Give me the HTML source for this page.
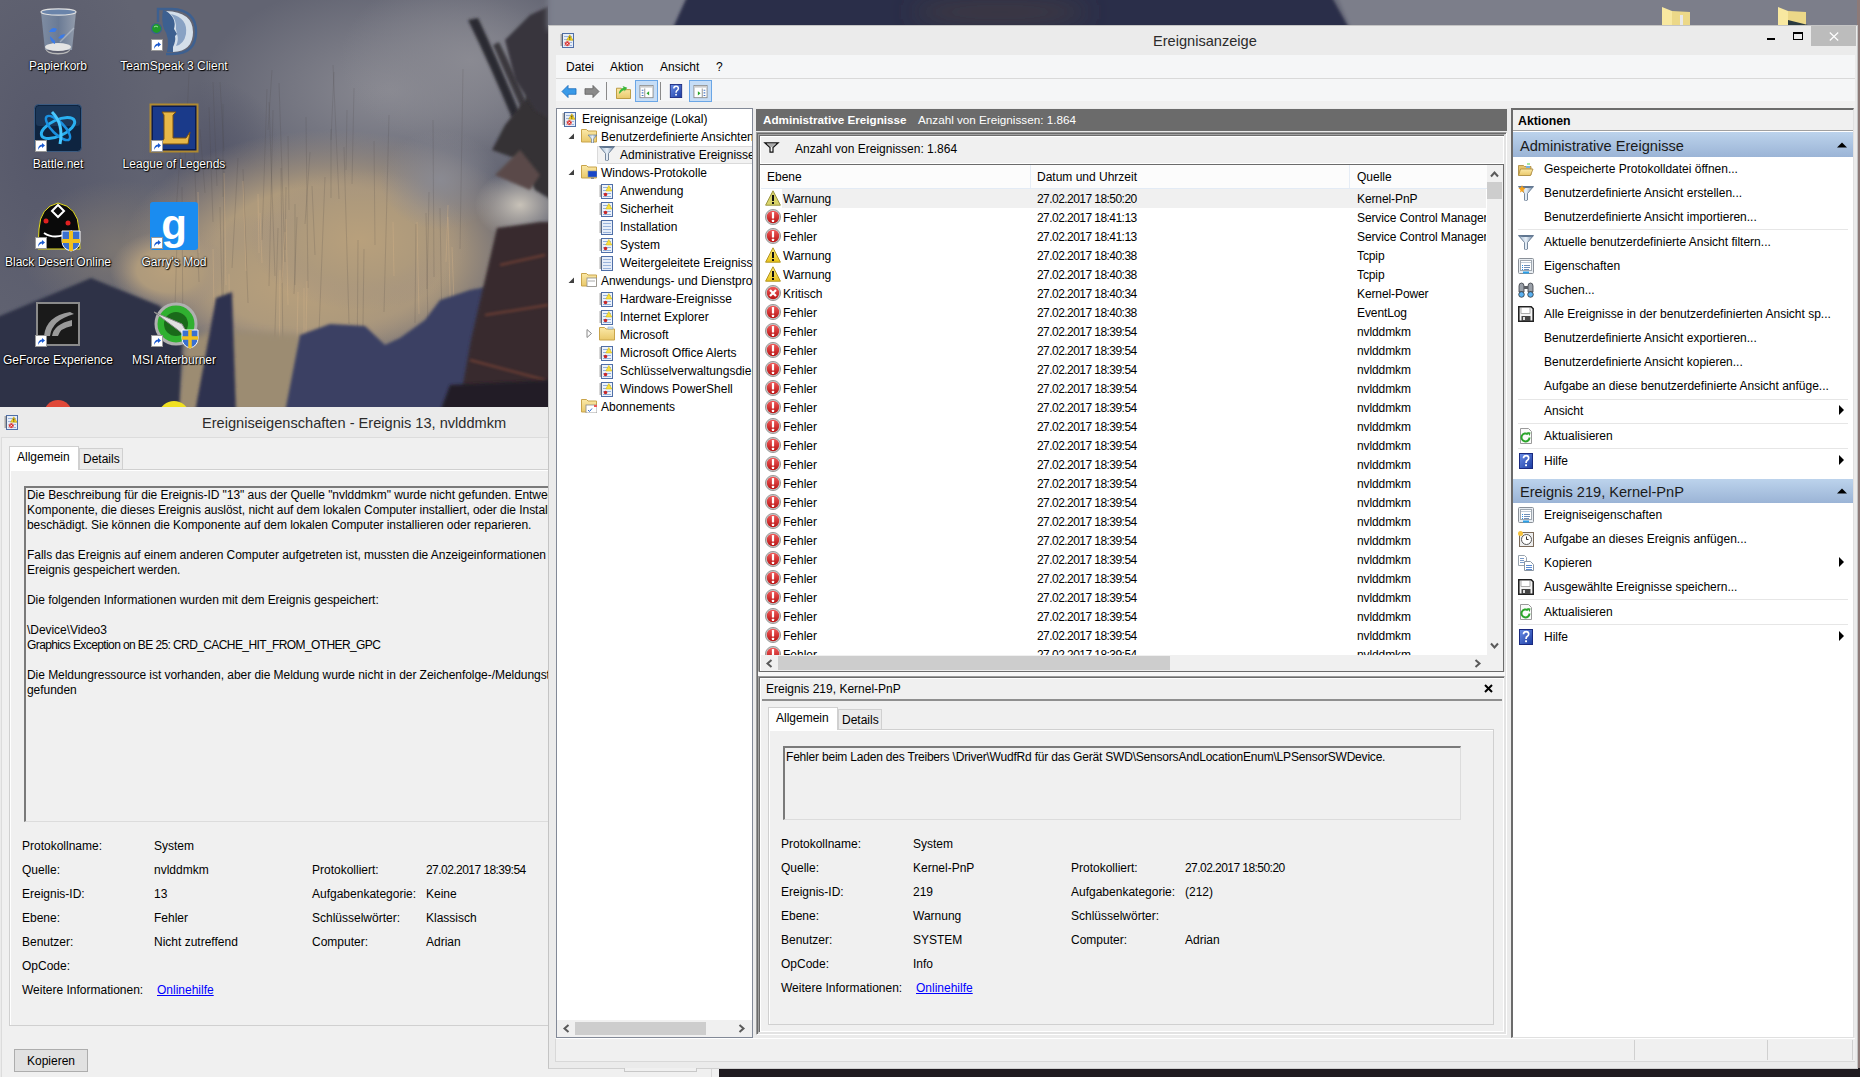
<!DOCTYPE html>
<html><head><meta charset="utf-8"><style>
*{margin:0;padding:0;box-sizing:border-box}
html,body{width:1860px;height:1077px;overflow:hidden;position:relative;font-family:"Liberation Sans",sans-serif;font-size:12px;color:#000}
.r{position:absolute}
.t{position:absolute;white-space:nowrap;line-height:12px;height:12px;margin-top:-10px}
.ic{position:absolute;overflow:visible}
.dl{color:#fff;text-shadow:0 0 2px #000,1px 1px 1px #000,0 0 1px #000;font-size:12px;text-align:center;width:130px;margin-left:-65px}
.dt{letter-spacing:-0.55px}
a{color:#0000ff;text-decoration:underline}
</style></head><body>

<svg width="0" height="0" style="position:absolute">
<defs>
<linearGradient id="gRed" x1="0" y1="0" x2="0" y2="1"><stop offset="0" stop-color="#f05a5a"/><stop offset="1" stop-color="#b81414"/></linearGradient>
<linearGradient id="gYel" x1="0" y1="0" x2="0" y2="1"><stop offset="0" stop-color="#fff07a"/><stop offset="1" stop-color="#e8c21a"/></linearGradient>
<linearGradient id="gFold" x1="0" y1="0" x2="0" y2="1"><stop offset="0" stop-color="#fbe9a8"/><stop offset="1" stop-color="#e9c86a"/></linearGradient>
<linearGradient id="gFun" x1="0" y1="0" x2="1" y2="0"><stop offset="0" stop-color="#9fb7cf"/><stop offset=".5" stop-color="#e8f0f8"/><stop offset="1" stop-color="#6f8aa8"/></linearGradient>
<linearGradient id="gBlueHdr" x1="0" y1="0" x2="0" y2="1"><stop offset="0" stop-color="#bcd3ec"/><stop offset="1" stop-color="#9bb4d6"/></linearGradient>
<linearGradient id="gHelp" x1="0" y1="0" x2="1" y2="1"><stop offset="0" stop-color="#6a8ee8"/><stop offset="1" stop-color="#1a3aa0"/></linearGradient>
<symbol id="warn" viewBox="0 0 16 16"><path d="M8 0.8 L15.4 15.2 H0.6 Z" fill="url(#gYel)" stroke="#b39420" stroke-width="1" stroke-linejoin="round"/><rect x="7" y="5" width="2" height="6" fill="#111"/><rect x="7" y="12" width="2" height="2" fill="#111"/></symbol>
<symbol id="warn2" viewBox="0 0 16 16"><path d="M8 0.8 L15.4 15.2 H0.6 Z" fill="#d9d46a" stroke="#9a9440" stroke-width="1" stroke-linejoin="round"/><rect x="7" y="5" width="2" height="6" fill="#111"/><rect x="7" y="12" width="2" height="2" fill="#111"/></symbol>
<symbol id="err" viewBox="0 0 16 16"><circle cx="8" cy="8" r="7.6" fill="#c8c8c8" stroke="#8a8a8a" stroke-width=".8"/><circle cx="8" cy="8" r="6.2" fill="url(#gRed)"/><rect x="6.9" y="3" width="2.2" height="6.5" rx=".6" fill="#fff"/><rect x="6.9" y="10.8" width="2.2" height="2.2" rx=".5" fill="#fff"/></symbol>
<symbol id="crit" viewBox="0 0 16 16"><circle cx="8" cy="8" r="7.6" fill="#c8c8c8" stroke="#8a8a8a" stroke-width=".8"/><circle cx="8" cy="8" r="6.2" fill="url(#gRed)"/><path d="M5 5 L11 11 M11 5 L5 11" stroke="#fff" stroke-width="2.2"/></symbol>
<symbol id="log" viewBox="0 0 14 15"><rect x="2.5" y="0.5" width="11" height="14" fill="#e6edf8" stroke="#4f6fa8"/><path d="M4 3.5h8M4 6.5h8M4 9.5h8M4 12.5h8" stroke="#9ab4dc" stroke-width="1"/><path d="M0.5 2h2.5M0.5 4h2.5M0.5 6h2.5M0.5 8h2.5M0.5 10h2.5M0.5 12h2.5" stroke="#555" stroke-width=".9"/><path d="M9.8 1.8 L13 7.3 H6.6 Z" fill="#f6d31c" stroke="#b89400" stroke-width=".5"/><path d="M9.8 3.6 V5.6 M9.8 6.2 V6.8" stroke="#222" stroke-width=".9"/><circle cx="7.3" cy="10.6" r="2.7" fill="#d42a2a" stroke="#fff" stroke-width=".5"/><path d="M6.3 9.6 L8.3 11.6 M8.3 9.6 L6.3 11.6" stroke="#fff" stroke-width=".8"/></symbol>
<symbol id="logs" viewBox="0 0 14 15"><rect x="2.5" y="0.5" width="11" height="14" fill="#eef3fa" stroke="#4f6fa8"/><path d="M4 3.5h8M4 6.5h8M4 9.5h8M4 12.5h8" stroke="#8fb0dc" stroke-width="1"/><path d="M0.5 2h2.5M0.5 4h2.5M0.5 6h2.5M0.5 8h2.5M0.5 10h2.5M0.5 12h2.5" stroke="#666" stroke-width="1"/><path d="M9.8 1.5 L12.8 7 H6.8 Z" fill="#f8e040" stroke="#d0b000" stroke-width=".5"/><circle cx="6.5" cy="10.5" r="1.8" fill="#c8282a"/></symbol>
<symbol id="logp" viewBox="0 0 14 15"><rect x="2.5" y="0.5" width="11" height="14" fill="#e6edf8" stroke="#4f6fa8"/><path d="M4 3.5h8M4 6.5h8M4 9.5h8M4 12.5h8" stroke="#9ab4dc" stroke-width="1"/><path d="M0.5 2h2.5M0.5 4h2.5M0.5 6h2.5M0.5 8h2.5M0.5 10h2.5M0.5 12h2.5" stroke="#555" stroke-width=".9"/></symbol>
<symbol id="folder" viewBox="0 0 16 16"><path d="M0.5 2.5 h5 l1.5 1.5 h8.5 v11 h-15 z" fill="url(#gFold)" stroke="#c9a44a"/><rect x="9" y="2" width="5" height="2" fill="#cfe2f5" stroke="#7aa0c8" stroke-width=".5"/></symbol>
<symbol id="folderf" viewBox="0 0 16 16"><path d="M0.5 2.5 h5 l1.5 1.5 h8.5 v11 h-15 z" fill="url(#gFold)" stroke="#c9a44a"/><path d="M7 8 h9 l-3.5 4 v4 h-2 v-4 z" fill="url(#gFun)" stroke="#5f7894" stroke-width=".6"/></symbol>
<symbol id="folderw" viewBox="0 0 16 16"><path d="M0.5 2.5 h5 l1.5 1.5 h8.5 v11 h-15 z" fill="url(#gFold)" stroke="#c9a44a"/><rect x="7" y="8" width="9" height="6" fill="#1846c8" stroke="#7a8aa0" stroke-width=".6"/><rect x="10" y="14.5" width="3" height="1.5" fill="#888"/></symbol>
<symbol id="foldera" viewBox="0 0 16 16"><path d="M0.5 2.5 h5 l1.5 1.5 h8.5 v11 h-15 z" fill="url(#gFold)" stroke="#c9a44a"/><rect x="6" y="7" width="9.5" height="8.5" fill="#fff" stroke="#8a8a8a" stroke-width=".8"/><path d="M7 10h7" stroke="#aaa"/></symbol>
<symbol id="folders" viewBox="0 0 16 16"><path d="M0.5 2.5 h5 l1.5 1.5 h8.5 v11 h-15 z" fill="url(#gFold)" stroke="#c9a44a"/><rect x="5" y="8" width="11" height="8" fill="#fff" stroke="#8a8a8a" stroke-width=".8"/><path d="M7 13 l1.5 1.5 l2.5 -3" stroke="#2a6ad0" fill="none"/><rect x="13" y="8" width="3" height="2" fill="#e55"/></symbol>
<symbol id="funnel" viewBox="0 0 16 16"><path d="M0.5 1.5 h15 l-6 7 v6.5 l-1.5 1 h-0.5 l-1 -1 v-6.5 z" fill="url(#gFun)" stroke="#5a6e88" stroke-width=".8"/><ellipse cx="8" cy="2" rx="7.5" ry="1" fill="#5f7590"/></symbol>
<symbol id="funnelo" viewBox="0 0 16 16"><path d="M0.5 1.5 h15 l-6 7 v6.5 l-1.5 1 h-0.5 l-1 -1 v-6.5 z" fill="url(#gFun)" stroke="#5a6e88" stroke-width=".8"/><ellipse cx="8" cy="2" rx="7.5" ry="1" fill="#5f7590"/><path d="M4 0 L5 2.5 L7.5 3 L5.5 5 L6 7.5 L4 6.2 L2 7.5 L2.5 5 L0.5 3 L3 2.5Z" fill="#f7a21a"/></symbol>
<symbol id="funnelb" viewBox="0 0 16 16"><path d="M1 2 h14 l-5.5 6 v5 h-3 v-5 z" fill="#f4f4f4" stroke="#111" stroke-width="1.1"/><path d="M4 3.5 h8 l-3 3.5 h-2z" fill="#aaa"/></symbol>
<symbol id="help" viewBox="0 0 16 16"><rect x="1.5" y="0.5" width="13" height="15" fill="url(#gHelp)" stroke="#1a2a80"/><path d="M5.5 5.2 q0-2.6 2.6-2.6 q2.6 0 2.6 2.5 q0 1.5-1.6 2.4 q-1 .6-1 1.9 v.6" stroke="#fff" stroke-width="1.7" fill="none"/><rect x="7.1" y="11.3" width="1.9" height="1.9" fill="#fff"/></symbol>
<symbol id="refresh" viewBox="0 0 16 16"><path d="M2.5 .5 h8 l3 3 v12 h-11z" fill="#fafafa" stroke="#9a9a9a"/><path d="M11.5 9.5 a4 4 0 1 1 -1.5 -3.2" stroke="#2aa52a" stroke-width="2" fill="none"/><path d="M9 4 l3.5 .5 l-.8 3.5z" fill="#2aa52a"/></symbol>
<symbol id="props" viewBox="0 0 16 16"><rect x=".5" y=".5" width="15" height="15" rx="1" fill="#e8edf2" stroke="#8a9098"/><rect x="2.5" y="2.5" width="11" height="10" fill="#fff" stroke="#a0a8b0" stroke-width="1"/><path d="M3 4.5h10" stroke="#c0ccd8" stroke-width="1"/><path d="M6 7.5h6M6 9.5h6M6 11.5h5" stroke="#6f8fb8" stroke-width="1"/><path d="M4 7.5h1M4 9.5h1M4 11.5h1" stroke="#2a8ae0" stroke-width="1"/><rect x="5" y="13.5" width="6" height="2" fill="#2aa0e8"/></symbol>
<symbol id="search" viewBox="0 0 16 16"><path d="M1 4 q0-3 2.5-3 q2.5 0 2.5 3 v6 h-5z" fill="#9aa0a8" stroke="#3a3e44" stroke-width=".8"/><path d="M10 4 q0-3 2.5-3 q2.5 0 2.5 3 v6 h-5z" fill="#9aa0a8" stroke="#3a3e44" stroke-width=".8"/><rect x="6" y="4" width="4" height="3" fill="#5a5e64"/><circle cx="3.5" cy="12.5" r="2.8" fill="#5ab0f0" stroke="#222" stroke-width=".7"/><circle cx="12.5" cy="12.5" r="2.8" fill="#5ab0f0" stroke="#222" stroke-width=".7"/></symbol>
<symbol id="save" viewBox="0 0 16 16"><path d="M.8 .8 h12.4 l2 2 v12.4 h-14.4z" fill="#f4f4f4" stroke="#222" stroke-width="1.6"/><rect x="3" y="1.5" width="9" height="6" fill="#fff" stroke="#777" stroke-width=".6"/><rect x="3.5" y="10" width="9" height="5" fill="#444"/><rect x="5" y="11" width="2" height="3" fill="#ddd"/></symbol>
<symbol id="openf" viewBox="0 0 16 16"><path d="M.5 4.5 h5 l1 1 h6.5 v8.5 h-12.5z" fill="#e6c46a" stroke="#a8863a" stroke-width=".8"/><path d="M2.5 8 h12.5 l-2.5 6.5 h-12z" fill="url(#gFold)" stroke="#a8863a" stroke-width=".8"/><path d="M9 3 h3" stroke="#4ad04a"/><rect x="8" y="5" width="4" height="2" fill="#7ab0e0"/></symbol>
<symbol id="copy" viewBox="0 0 16 16"><path d="M.5 .5 h6 l2 2 v8 h-8z" fill="#fff" stroke="#9aa4ae"/><path d="M2 3.5h4M2 5.5h4M2 7.5h4" stroke="#7a9ac8"/><path d="M6.5 6.5 h6 l3 3 v6 h-9z" fill="#fff" stroke="#8a96a4"/><path d="M8 10.5h6M8 12.5h6M8 14.5h6" stroke="#5a8ad0"/></symbol>
<symbol id="task" viewBox="0 0 16 16"><rect x="1.5" y="1.5" width="14" height="14" fill="#eee" stroke="#7a6a5a"/><circle cx="8.5" cy="8.5" r="5" fill="#fff" stroke="#555"/><path d="M8.5 5.5 v3 h2" stroke="#333" fill="none"/><circle cx="2.5" cy="2.5" r="2.5" fill="#f6c23a"/></symbol>
<symbol id="back" viewBox="0 0 16 16"><path d="M0.5 8 L7 1.5 V5 H15.5 V11 H7 V14.5 Z" fill="#3a9ae8" stroke="#1a6ab8" stroke-width=".8"/></symbol>
<symbol id="fwd" viewBox="0 0 16 16"><path d="M15.5 8 L9 1.5 V5 H0.5 V11 H9 V14.5 Z" fill="#8a8a8a" stroke="#5a5a5a" stroke-width=".8"/></symbol>
<symbol id="upf" viewBox="0 0 16 16"><path d="M.5 4.5 h5 l1.5 1.5 h8.5 v9.5 h-15z" fill="url(#gFold)" stroke="#b8963a"/><path d="M3 10 q1-5 5-6 l-1-2 l5 2 l-3 4 v-2 q-3 1-5 4z" fill="#3cb83c"/></symbol>
<symbol id="tb1" viewBox="0 0 16 16"><rect x=".5" y=".5" width="15" height="14" fill="#fff" stroke="#888"/><rect x="1" y="1" width="14" height="2" fill="#ccc"/><path d="M2.5 6h2M2.5 9h2M2.5 12h2" stroke="#4a7ac8" stroke-width="1.2"/><path d="M6 4v10" stroke="#888"/><path d="M11 7 l-3 2.5 l3 2.5z" fill="#2aa52a"/></symbol>
<symbol id="tb2" viewBox="0 0 16 16"><rect x=".5" y=".5" width="15" height="14" fill="#fff" stroke="#888"/><rect x="1" y="1" width="14" height="2" fill="#ccc"/><path d="M11.5 6h2M11.5 9h2M11.5 12h2" stroke="#4a7ac8" stroke-width="1.2"/><path d="M10 4v10" stroke="#888"/><path d="M5 7 l3 2.5 l-3 2.5z" fill="#2aa52a"/></symbol>
</defs></svg>

<svg class="r" style="left:0;top:0" width="1860" height="1077">
<defs>
<filter id="bl2" x="-10%" y="-10%" width="120%" height="120%"><feGaussianBlur stdDeviation="1.5"/></filter>
<filter id="bl3" x="-10%" y="-10%" width="120%" height="120%"><feGaussianBlur stdDeviation="3"/></filter>
<filter id="bl10" x="-30%" y="-30%" width="160%" height="160%"><feGaussianBlur stdDeviation="12"/></filter>
<filter id="bl20" x="-50%" y="-50%" width="200%" height="200%"><feGaussianBlur stdDeviation="25"/></filter>
</defs>
<rect width="1860" height="1077" fill="#626472"/>
<!-- sky -->
<radialGradient id="rg1" cx=".5" cy=".5" r=".5"><stop offset="0" stop-color="#8a8a92"/><stop offset="1" stop-color="#8a8a92" stop-opacity="0"/></radialGradient>
<radialGradient id="rg2" cx=".5" cy=".5" r=".5"><stop offset="0" stop-color="#b8a07c"/><stop offset=".55" stop-color="#ae9a7c"/><stop offset="1" stop-color="#a09080" stop-opacity="0"/></radialGradient>
<radialGradient id="rg3" cx=".5" cy=".5" r=".5"><stop offset="0" stop-color="#56586a"/><stop offset="1" stop-color="#56586a" stop-opacity="0"/></radialGradient>
<radialGradient id="rg4" cx=".5" cy=".5" r=".5"><stop offset="0" stop-color="#c8c2b8"/><stop offset="1" stop-color="#c8c2b8" stop-opacity="0"/></radialGradient>
<radialGradient id="rg5" cx=".5" cy=".5" r=".5"><stop offset="0" stop-color="#7c7672"/><stop offset="1" stop-color="#7c7672" stop-opacity="0"/></radialGradient>
<ellipse cx="390" cy="90" rx="190" ry="110" fill="url(#rg1)"/>
<ellipse cx="40" cy="150" rx="120" ry="220" fill="url(#rg3)"/>
<ellipse cx="120" cy="250" rx="100" ry="70" fill="url(#rg5)"/>
<ellipse cx="210" cy="150" rx="70" ry="70" fill="url(#rg3)"/>
<ellipse cx="470" cy="60" rx="130" ry="90" fill="url(#rg1)"/>
<ellipse cx="330" cy="255" rx="210" ry="125" fill="url(#rg2)"/>
<ellipse cx="300" cy="285" rx="150" ry="75" fill="url(#rg2)"/>
<ellipse cx="360" cy="240" rx="110" ry="70" fill="url(#rg2)"/>
<ellipse cx="170" cy="270" rx="60" ry="40" fill="url(#rg2)"/>
<ellipse cx="440" cy="180" rx="60" ry="50" fill="url(#rg1)"/>
<ellipse cx="520" cy="205" rx="45" ry="35" fill="url(#rg4)"/>
<g stroke="#4a4440" stroke-width="1" opacity=".18" fill="none"><path d="M267 89 L262 240 M331 129 L331 198 M181 142 L176 212 M297 217 L294 294 M358 240 L357 381 M463 69 L460 249 M213 82 L217 186 M224 171 L223 320 M334 72 L331 140 M374 141 L375 245 M306 117 L308 288 M243 169 L248 303 M389 115 L384 312 M295 204 L295 285 M182 187 L183 354 M433 120 L434 277 M344 147 L349 324 M312 186 L315 255 M364 249 L362 400 M286 187 L285 250 M220 82 L224 151 M209 107 L213 222 M194 145 L199 282 M416 224 L415 323 M278 228 L273 400 M223 104 L223 197 M347 110 L346 170 M281 168 L283 361 M325 177 L319 332 M440 208 L443 391 M288 136 L289 210 M189 73 L185 162 M272 70 L268 130 M200 129 L205 193 M354 88 L352 184 M279 83 L285 262 M310 152 L305 224 M273 110 L269 286 M177 241 L173 375 M333 65 L339 199 M429 192 L427 289 M220 207 L223 341 M269 102 L275 276 M426 213 L429 388 M238 158 L232 268"/></g>
<g stroke="#d8b48a" stroke-width="1" opacity=".35" fill="none"><path d="M198 192 L199 253 M448 217 L451 332 M448 205 L446 262 M243 181 L246 271 M417 222 L419 314 M213 249 L215 362 M393 222 L394 276 M280 270 L279 388 M298 292 L296 390 M224 173 L226 285 M229 274 L230 392 M285 232 L282 283 M452 247 L455 330 M307 281 L305 387 M258 194 L259 253 M260 213 L262 263 M286 219 L288 305 M304 288 L304 368"/></g>
<!-- bottom left roof -->
<path d="M175 412 L185 340 L215 330 L300 335 L300 412 Z" fill="#9c8c72" filter="url(#bl3)"/>
<path d="M-5 318 L91 278 L160 306 L182 345 L179 412 L-5 412 Z" fill="#2d3147" filter="url(#bl2)"/>
<path d="M195 412 L216 298 L232 292 L236 412 Z" fill="#2e3350" filter="url(#bl2)"/>
<path d="M285 412 L300 335 L330 324 L365 326 L385 345 L400 338 L425 320 L440 300 L470 290 L492 286 L475 412 Z" fill="#3a4164" filter="url(#bl2)"/>

<!-- right dark block -->
<path d="M458 412 L471 340 L497 228 L540 222 L552 222 L552 412 Z" fill="#372a2d" filter="url(#bl2)"/>
<path d="M500 265 L545 255 M485 315 L548 305 M470 360 L545 380" stroke="#a9553a" stroke-width="1.5" opacity=".7" filter="url(#bl2)"/>
<path d="M440 412 L450 385 L552 380 L552 412 Z" fill="#211e27" filter="url(#bl2)"/>
<!-- upper right branches -->
<path d="M468 20 Q490 65 512 118 L520 114 Q498 60 478 18 Z" fill="#2c2a30" filter="url(#bl2)"/>
<path d="M493 45 Q508 80 522 110 L528 106 Q514 72 499 42Z" fill="#3a383e" filter="url(#bl2)"/>
<path d="M492 150 L505 125 L525 100 L548 50 L552 200 L535 190 L520 160 Z" fill="#343036" filter="url(#bl2)"/>
<path d="M505 40 L530 15 L552 5 L552 120 L535 110 L515 80 Z" fill="#38363c" filter="url(#bl2)"/>
<path d="M495 175 L520 150 L540 175 L530 190Z" fill="#5a4a48" filter="url(#bl2)"/>
<!-- top strip -->
<path d="M548 -10 H1860 V30 H548Z" fill="#6c6e7c"/>
<path d="M548 -10 H700 L680 30 H548Z" fill="#7d808d" filter="url(#bl3)"/>
<path d="M690 -10 L1328 -10 L1350 30 L672 30 Z" fill="#2a2d48" filter="url(#bl2)"/>
<ellipse cx="1000" cy="12" rx="90" ry="8" fill="#4a4040" filter="url(#bl10)"/>
<path d="M1335 -10 H1860 V30 H1352Z" fill="#7c7e8a" filter="url(#bl2)"/>
<!-- right edge brownish -->
<rect x="1857" y="0" width="3" height="1077" fill="#8d7a78"/>
<!-- bottom strip -->
<rect x="548" y="1068" width="171" height="9" fill="#f0f0f0"/>
<rect x="711" y="1068" width="1" height="9" fill="#d8d8d8"/>
<rect x="719" y="1068" width="1141" height="9" fill="#1f1b20"/>
</svg>
<svg class="ic" style="left:40px;top:8px" width="37" height="46"><defs><linearGradient id="gbin" x1="0" x2="1"><stop offset="0" stop-color="#8a9cb4"/><stop offset=".5" stop-color="#6f84a2"/><stop offset="1" stop-color="#a4b0c0"/></linearGradient></defs><path d="M1 4 L36 4 L32 42 L5 42 Z" fill="url(#gbin)" fill-opacity=".75"/><ellipse cx="18.5" cy="4" rx="17.5" ry="3.2" fill="#6a84aa" stroke="#e0e0e0" stroke-width="1.2"/><path d="M34 20 L20 34" stroke="#c0c8d4" stroke-width="1.5" opacity=".6"/><ellipse cx="18" cy="39" rx="13" ry="4" fill="#e4e4e4"/><path d="M5.5 39 Q6 45 18 45 Q30 45 30.5 39 V41 Q30 46 18 46.5 Q6 46 5.5 41Z" fill="#b8b8b8"/><path d="M9 24 q3-6 8-3 l-2 3z M18 30 q5 2 7-4 l-4 1z M10 28 q0 6 5 8 l0-3z" fill="#3a7ae8"/></svg>
<svg class="ic" style="left:150px;top:7px" width="50" height="48"><path d="M8 15 V2 H22 Q46 3 46 25 Q46 47 22 47 H16" fill="none" stroke="#3d6090" stroke-width="2.4"/><path d="M13 3 Q 26 7 26 18 L24 22 L27 26 Q 24 36 24 45 L17 45 Q 20 30 14 22 Q 11 14 13 3Z" fill="#3d6090"/><path d="M16 4 Q 43 5 43 25 Q 43 44 23 45 L23 40 Q 26 34 25 29 L 27 27 L 24 22 Q 27 11 16 4 Z" fill="#d4dfea"/><path d="M21 7 Q38 11 36 27 Q34 37 26 39 Q29 33 27 27 L26 22 Q27 14 21 7Z" fill="#88a2c4"/><circle cx="6.5" cy="21.5" r="5" fill="#1f9a2a" stroke="#3d6090" stroke-width="1.2"/><path d="M4 20 q2-2 4 0" stroke="#b8f0b8" stroke-width=".8" fill="none"/></svg>
<svg class="ic" style="left:151px;top:39px" width="12" height="12"><rect x=".5" y=".5" width="11" height="11" fill="#fff" stroke="#999"/><path d="M3 10 Q3 5 7 4.5 V3 L10 5.5 L7 8 V6.5 Q4.5 6.5 3 10Z" fill="#1a5ad0"/></svg>
<svg class="ic" style="left:34px;top:104px" width="48" height="48"><rect x=".5" y=".5" width="47" height="47" rx="4" fill="#0e2440" stroke="#3a5a80"/><rect x="2" y="2" width="44" height="20" rx="3" fill="#2a4a70" fill-opacity=".5"/><ellipse cx="24" cy="24" rx="18" ry="8" fill="none" stroke="#2ab0f0" stroke-width="3" transform="rotate(-25 24 24)"/><ellipse cx="24" cy="24" rx="16" ry="6" fill="none" stroke="#1a90e0" stroke-width="2.5" transform="rotate(45 24 24)"/><path d="M18 8 Q30 20 26 40" stroke="#4ac8ff" stroke-width="3" fill="none"/></svg>
<svg class="ic" style="left:35px;top:140px" width="12" height="12"><rect x=".5" y=".5" width="11" height="11" fill="#fff" stroke="#999"/><path d="M3 10 Q3 5 7 4.5 V3 L10 5.5 L7 8 V6.5 Q4.5 6.5 3 10Z" fill="#1a5ad0"/></svg>
<svg class="ic" style="left:150px;top:104px" width="48" height="48"><rect x=".5" y=".5" width="47" height="47" fill="#0a1a50" stroke="#b08a30" stroke-width="2"/><rect x="3" y="3" width="42" height="42" fill="#1a3a8a"/><path d="M12 8 H26 L23 11 V34 H36 L40 28 L38 40 H10 L14 35 V11 Z" fill="#e8b848" stroke="#7a5010" stroke-width="1"/></svg>
<svg class="ic" style="left:151px;top:140px" width="12" height="12"><rect x=".5" y=".5" width="11" height="11" fill="#fff" stroke="#999"/><path d="M3 10 Q3 5 7 4.5 V3 L10 5.5 L7 8 V6.5 Q4.5 6.5 3 10Z" fill="#1a5ad0"/></svg>
<svg class="ic" style="left:34px;top:201px" width="48" height="50"><path d="M24 2 Q44 6 45 28 L46 48 H4 L5 28 Q6 6 24 2Z" fill="#0a0a0a" stroke="#e8e020" stroke-width="1"/><path d="M18 10 L24 4 L30 10 L24 16Z" fill="none" stroke="#fff" stroke-width="2"/><circle cx="12" cy="20" r="2.5" fill="#e02020"/><circle cx="34" cy="22" r="2.5" fill="#e02020"/><path d="M10 32 Q22 40 38 30" stroke="#fff" stroke-width="2" fill="none"/><path d="M28 30 L46 30 V40 Q46 48 37 50 Q28 48 28 40Z" fill="#3a70d0" stroke="#fff"/><path d="M37 30 V50 M28 40 H46" stroke="#f0c020" stroke-width="4"/></svg>
<svg class="ic" style="left:35px;top:237px" width="12" height="12"><rect x=".5" y=".5" width="11" height="11" fill="#fff" stroke="#999"/><path d="M3 10 Q3 5 7 4.5 V3 L10 5.5 L7 8 V6.5 Q4.5 6.5 3 10Z" fill="#1a5ad0"/></svg>
<svg class="ic" style="left:150px;top:202px" width="48" height="48"><rect width="48" height="48" rx="3" fill="#1a8cf0"/><text x="24" y="37" font-family="Liberation Sans" font-weight="bold" font-size="42" fill="#fff" text-anchor="middle">g</text></svg>
<svg class="ic" style="left:151px;top:237px" width="12" height="12"><rect x=".5" y=".5" width="11" height="11" fill="#fff" stroke="#999"/><path d="M3 10 Q3 5 7 4.5 V3 L10 5.5 L7 8 V6.5 Q4.5 6.5 3 10Z" fill="#1a5ad0"/></svg>
<svg class="ic" style="left:36px;top:302px" width="44" height="44"><rect x="1" y="1" width="42" height="42" fill="#1a1a1a" stroke="#8a8a8a" stroke-width="2"/><path d="M8 34 Q10 14 34 10 L38 12 Q16 18 14 34Z M16 34 Q18 22 36 18 V24 Q24 26 22 34Z" fill="#9a9a9a"/></svg>
<svg class="ic" style="left:35px;top:335px" width="12" height="12"><rect x=".5" y=".5" width="11" height="11" fill="#fff" stroke="#999"/><path d="M3 10 Q3 5 7 4.5 V3 L10 5.5 L7 8 V6.5 Q4.5 6.5 3 10Z" fill="#1a5ad0"/></svg>
<svg class="ic" style="left:152px;top:302px" width="48" height="46"><circle cx="24" cy="22" r="20" fill="#30b030" stroke="#b0b0b0" stroke-width="3"/><circle cx="24" cy="22" r="12" fill="#1a6a1a"/><path d="M2 10 L30 22 L40 40 L26 28 Z" fill="#e0e0e0" stroke="#888"/><path d="M30 28 L46 28 V36 Q46 44 38 46 Q30 44 30 36Z" fill="#3a70d0" stroke="#fff"/><path d="M38 28 V46 M30 36 H46" stroke="#f0c020" stroke-width="3.5"/></svg>
<svg class="ic" style="left:151px;top:335px" width="12" height="12"><rect x=".5" y=".5" width="11" height="11" fill="#fff" stroke="#999"/><path d="M3 10 Q3 5 7 4.5 V3 L10 5.5 L7 8 V6.5 Q4.5 6.5 3 10Z" fill="#1a5ad0"/></svg>
<svg class="ic" style="left:40px;top:398px" width="40" height="10"><circle cx="18" cy="16" r="14" fill="#e04838"/></svg>
<svg class="ic" style="left:158px;top:399px" width="36" height="10"><ellipse cx="16" cy="14" rx="14" ry="12" fill="#f0e020"/></svg>
<div class="t dl" style="left:58px;top:70px;">Papierkorb</div>
<div class="t dl" style="left:174px;top:70px;">TeamSpeak 3 Client</div>
<div class="t dl" style="left:58px;top:168px;">Battle.net</div>
<div class="t dl" style="left:174px;top:168px;">League of Legends</div>
<div class="t dl" style="left:58px;top:266px;">Black Desert Online</div>
<div class="t dl" style="left:174px;top:266px;">Garry's Mod</div>
<div class="t dl" style="left:58px;top:364px;">GeForce Experience</div>
<div class="t dl" style="left:174px;top:364px;">MSI Afterburner</div>
<svg class="ic" style="left:1662px;top:7px" width="28" height="18"><path d="M0 0 L10 4 L10 18 L0 18Z" fill="#f8e8a0"/><path d="M10 4 L28 5 V18 H10Z" fill="#ecd888"/><rect x="18" y="8" width="3" height="10" fill="#e8e8e8"/></svg>
<svg class="ic" style="left:1778px;top:7px" width="30" height="18"><path d="M0 0 L10 4 L10 18 L0 18Z" fill="#f8e8a0"/><path d="M10 4 L28 5 V18 H10Z" fill="#ecd888"/><path d="M10 13 L30 18 H10Z" fill="#2a3a40"/></svg><div class="r " style="left:0px;top:407px;width:548px;height:670px;background:#ebebeb"></div>
<svg class="ic" style="left:4px;top:415px" width="14" height="15"><use href="#log"/></svg>
<div class="t " style="left:202px;top:427px;font-size:14.6px;color:#2b2b2b">Ereigniseigenschaften - Ereignis 13, nvlddmkm</div>
<div class="r " style="left:1px;top:437px;width:547px;height:640px;background:#f0f0f0;border-top:1px solid #dcdcdc;border-left:1px solid #dcdcdc"></div>
<div class="r " style="left:9px;top:469px;width:560px;height:557px;border:1px solid #d0d0d0;background:#f0f0f0;box-shadow:inset 1px 1px 0 #fff"></div>
<div class="r " style="left:9px;top:446px;width:70px;height:24px;background:#fff;border:1px solid #d0d0d0;border-bottom:none"></div>
<div class="r " style="left:79px;top:448px;width:44px;height:22px;background:#ebebeb;border:1px solid #d0d0d0"></div>
<div class="t " style="left:17px;top:461px;">Allgemein</div>
<div class="t " style="left:83px;top:463px;">Details</div>
<div class="r " style="left:24px;top:486px;width:560px;height:336px;border-top:2px solid #7a7a7a;border-left:2px solid #7a7a7a;border-bottom:1px solid #dcdcdc;background:#f0f0f0"></div>
<div class="t " style="left:27px;top:499px;letter-spacing:-0.05px">Die Beschreibung für die Ereignis-ID "13" aus der Quelle "nvlddmkm" wurde nicht gefunden. Entweder ist die</div>
<div class="t " style="left:27px;top:514px;letter-spacing:-0.05px">Komponente, die dieses Ereignis auslöst, nicht auf dem lokalen Computer installiert, oder die Installation ist</div>
<div class="t " style="left:27px;top:529px;letter-spacing:-0.05px">beschädigt. Sie können die Komponente auf dem lokalen Computer installieren oder reparieren.</div>
<div class="t " style="left:27px;top:559px;letter-spacing:-0.05px">Falls das Ereignis auf einem anderen Computer aufgetreten ist, mussten die Anzeigeinformationen mit dem</div>
<div class="t " style="left:27px;top:574px;letter-spacing:-0.05px">Ereignis gespeichert werden.</div>
<div class="t " style="left:27px;top:604px;letter-spacing:-0.05px">Die folgenden Informationen wurden mit dem Ereignis gespeichert:</div>
<div class="t " style="left:27px;top:634px;letter-spacing:-0.05px">\Device\Video3</div>
<div class="t " style="left:27px;top:649px;letter-spacing:-0.6px">Graphics Exception on BE 25: CRD_CACHE_HIT_FROM_OTHER_GPC</div>
<div class="t " style="left:27px;top:679px;letter-spacing:-0.05px">Die Meldungressource ist vorhanden, aber die Meldung wurde nicht in der Zeichenfolge-/Meldungstabelle</div>
<div class="t " style="left:27px;top:694px;letter-spacing:-0.05px">gefunden</div>
<div class="t " style="left:22px;top:850px;">Protokollname:</div>
<div class="t " style="left:154px;top:850px;">System</div>
<div class="t " style="left:22px;top:874px;">Quelle:</div>
<div class="t " style="left:154px;top:874px;">nvlddmkm</div>
<div class="t " style="left:312px;top:874px;">Protokolliert:</div>
<div class="t dt" style="left:426px;top:874px;">27.02.2017 18:39:54</div>
<div class="t " style="left:22px;top:898px;">Ereignis-ID:</div>
<div class="t " style="left:154px;top:898px;">13</div>
<div class="t " style="left:312px;top:898px;">Aufgabenkategorie:</div>
<div class="t " style="left:426px;top:898px;">Keine</div>
<div class="t " style="left:22px;top:922px;">Ebene:</div>
<div class="t " style="left:154px;top:922px;">Fehler</div>
<div class="t " style="left:312px;top:922px;">Schlüsselwörter:</div>
<div class="t " style="left:426px;top:922px;">Klassisch</div>
<div class="t " style="left:22px;top:946px;">Benutzer:</div>
<div class="t " style="left:154px;top:946px;">Nicht zutreffend</div>
<div class="t " style="left:312px;top:946px;">Computer:</div>
<div class="t " style="left:426px;top:946px;">Adrian</div>
<div class="t " style="left:22px;top:970px;">OpCode:</div>
<div class="t " style="left:154px;top:970px;"></div>
<div class="t " style="left:22px;top:994px;">Weitere Informationen:</div>
<div class="t " style="left:157px;top:994px;"><a>Onlinehilfe</a></div>
<div class="r " style="left:14px;top:1049px;width:74px;height:23px;background:#e1e1e1;border:1px solid #adadad"></div>
<div class="t " style="left:27px;top:1065px;">Kopieren</div><div class="r " style="left:548px;top:25px;width:1310px;height:1044px;background:#ebebeb;border:1px solid #c4c4c4;border-bottom-color:#d0d0d0"></div>
<svg class="ic" style="left:560px;top:33px" width="14" height="15"><use href="#log"/></svg>
<div class="t " style="left:1153px;top:45px;font-size:14.6px;color:#2b2b2b">Ereignisanzeige</div>
<div class="r " style="left:1767px;top:38px;width:8px;height:2px;background:#000"></div>
<div class="r " style="left:1793px;top:32px;width:10px;height:8px;border:1px solid #000;border-top-width:2px"></div>
<div class="r " style="left:1811px;top:26px;width:45px;height:20px;background:#bcbcbc"></div>
<svg class="ic" style="left:1829px;top:32px" width="10" height="9"><path d="M.8 .5 L9.2 8.5 M9.2 .5 L.8 8.5" stroke="#fff" stroke-width="1.2"/></svg>
<div class="r " style="left:556px;top:55px;width:1299px;height:23px;background:#f5f6f7"></div>
<div class="r " style="left:556px;top:78px;width:1299px;height:1px;background:#d9d9d9"></div>
<div class="t " style="left:566px;top:71px;">Datei</div>
<div class="t " style="left:610px;top:71px;">Aktion</div>
<div class="t " style="left:660px;top:71px;">Ansicht</div>
<div class="t " style="left:716px;top:71px;">?</div>
<div class="r " style="left:556px;top:79px;width:1299px;height:22px;background:#f5f6f7"></div>
<div class="r " style="left:556px;top:101px;width:1299px;height:7px;background:#f0f0f0"></div>
<svg class="ic" style="left:561px;top:84px" width="16" height="15"><use href="#back"/></svg>
<svg class="ic" style="left:584px;top:84px" width="16" height="15"><use href="#fwd"/></svg>
<div class="r " style="left:606px;top:82px;width:1px;height:18px;background:#8a8a8a"></div>
<svg class="ic" style="left:616px;top:84px" width="15" height="15"><use href="#upf"/></svg>
<div class="r " style="left:635px;top:80px;width:23px;height:22px;background:#c6ddf6;border:1px solid #6aa6e6"></div>
<svg class="ic" style="left:639px;top:85px" width="15" height="14"><use href="#tb1"/></svg>
<div class="r " style="left:660px;top:82px;width:1px;height:18px;background:#8a8a8a"></div>
<svg class="ic" style="left:669px;top:83px" width="14" height="16"><use href="#help"/></svg>
<div class="r " style="left:689px;top:80px;width:23px;height:22px;background:#c6ddf6;border:1px solid #6aa6e6"></div>
<svg class="ic" style="left:693px;top:85px" width="15" height="14"><use href="#tb2"/></svg>
<div class="r " style="left:555px;top:1038px;width:1300px;height:24px;background:#f0f0f0;border-top:1px solid #fff;border-bottom:1px solid #d8d8d8;border-left:1px solid #d8d8d8"></div>
<div class="r " style="left:1634px;top:1040px;width:1px;height:20px;background:#d0d0d0"></div>
<div class="r " style="left:1767px;top:1040px;width:1px;height:20px;background:#d0d0d0"></div>
<div class="r " style="left:1852px;top:1040px;width:1px;height:20px;background:#d0d0d0"></div>
<div class="r " style="left:624px;top:1068px;width:73px;height:4px;background:#f0f0f0;border:1px solid #c8c8c8;border-top:none"></div><div class="r " style="left:556px;top:108px;width:197px;height:930px;background:#fff;border:1px solid #828997"></div>
<div class="r " style="left:597px;top:146px;width:155px;height:18px;background:#f2f2f2;border:1px solid #dadada;border-right:none"></div>
<div class="r " style="left:556px;top:108px;width:196px;height:912px;overflow:hidden"><svg class="ic" style="left:6px;top:4px" width="14" height="15"><use href="#log"/></svg>
<div class="t " style="left:26px;top:15px;">Ereignisanzeige (Lokal)</div>
<svg class="ic" style="left:25px;top:19px" width="16" height="16"><use href="#folderf"/></svg>
<div class="t " style="left:45px;top:33px;">Benutzerdefinierte Ansichten</div>
<svg class="ic" style="left:12px;top:25px" width="7" height="7"><path d="M6 0.5 V6 H0.5 Z" fill="#404040"/></svg>
<svg class="ic" style="left:43px;top:37px" width="16" height="16"><use href="#funnel"/></svg>
<div class="t " style="left:64px;top:51px;">Administrative Ereignisse</div>
<svg class="ic" style="left:25px;top:55px" width="16" height="16"><use href="#folderw"/></svg>
<div class="t " style="left:45px;top:69px;">Windows-Protokolle</div>
<svg class="ic" style="left:12px;top:61px" width="7" height="7"><path d="M6 0.5 V6 H0.5 Z" fill="#404040"/></svg>
<svg class="ic" style="left:43px;top:76px" width="14" height="15"><use href="#logs"/></svg>
<div class="t " style="left:64px;top:87px;">Anwendung</div>
<svg class="ic" style="left:43px;top:94px" width="14" height="15"><use href="#logs"/></svg>
<div class="t " style="left:64px;top:105px;">Sicherheit</div>
<svg class="ic" style="left:43px;top:112px" width="14" height="15"><use href="#logp"/></svg>
<div class="t " style="left:64px;top:123px;">Installation</div>
<svg class="ic" style="left:43px;top:130px" width="14" height="15"><use href="#logs"/></svg>
<div class="t " style="left:64px;top:141px;">System</div>
<svg class="ic" style="left:43px;top:148px" width="14" height="15"><use href="#logp"/></svg>
<div class="t " style="left:64px;top:159px;">Weitergeleitete Ereignisse</div>
<svg class="ic" style="left:25px;top:163px" width="16" height="16"><use href="#foldera"/></svg>
<div class="t " style="left:45px;top:177px;">Anwendungs- und Dienstprotokolle</div>
<svg class="ic" style="left:12px;top:169px" width="7" height="7"><path d="M6 0.5 V6 H0.5 Z" fill="#404040"/></svg>
<svg class="ic" style="left:43px;top:184px" width="14" height="15"><use href="#logs"/></svg>
<div class="t " style="left:64px;top:195px;">Hardware-Ereignisse</div>
<svg class="ic" style="left:43px;top:202px" width="14" height="15"><use href="#logs"/></svg>
<div class="t " style="left:64px;top:213px;">Internet Explorer</div>
<svg class="ic" style="left:43px;top:217px" width="16" height="16"><use href="#folder"/></svg>
<div class="t " style="left:64px;top:231px;">Microsoft</div>
<svg class="ic" style="left:30px;top:221px" width="7" height="9"><path d="M1 .5 L5.5 4.5 L1 8.5Z" fill="#fff" stroke="#888"/></svg>
<svg class="ic" style="left:43px;top:238px" width="14" height="15"><use href="#logs"/></svg>
<div class="t " style="left:64px;top:249px;">Microsoft Office Alerts</div>
<svg class="ic" style="left:43px;top:256px" width="14" height="15"><use href="#logs"/></svg>
<div class="t " style="left:64px;top:267px;">Schlüsselverwaltungsdienst</div>
<svg class="ic" style="left:43px;top:274px" width="14" height="15"><use href="#logs"/></svg>
<div class="t " style="left:64px;top:285px;">Windows PowerShell</div>
<svg class="ic" style="left:25px;top:289px" width="16" height="16"><use href="#folders"/></svg>
<div class="t " style="left:45px;top:303px;">Abonnements</div></div>
<div class="r " style="left:557px;top:1020px;width:195px;height:17px;background:#f0f0f0"></div>
<div class="r " style="left:575px;top:1022px;width:131px;height:13px;background:#cdcdcd"></div>
<svg class="ic" style="left:562px;top:1024px" width="8" height="9"><path d="M6.5 1 L2.5 4.5 L6.5 8" stroke="#5a5a5a" stroke-width="2" fill="none"/></svg>
<svg class="ic" style="left:738px;top:1024px" width="8" height="9"><path d="M1.5 1 L5.5 4.5 L1.5 8" stroke="#5a5a5a" stroke-width="2" fill="none"/></svg><div class="r " style="left:756px;top:109px;width:751px;height:22px;background:#6b6b6b"></div>
<div class="t " style="left:763px;top:124px;color:#fff;font-size:11.7px"><b>Administrative Ereignisse</b></div>
<div class="t " style="left:918px;top:124px;color:#fff;font-size:11.7px">Anzahl von Ereignissen: 1.864</div>
<div class="r " style="left:756px;top:132px;width:751px;height:903px;background:#f0f0f0;border-top:1px solid #9a9a9a;border-left:1px solid #9a9a9a;border-right:1px solid #fff;border-bottom:1px solid #fff;box-shadow:inset 1px 1px 0 #6b6b6b,inset -1px -1px 0 #e3e3e3"></div>
<div class="r " style="left:758px;top:134px;width:747px;height:538px;background:#f0f0f0;border-top:1px solid #a0a0a0;border-left:1px solid #a0a0a0;border-right:1px solid #e3e3e3;border-bottom:1px solid #e3e3e3;box-shadow:inset 1px 1px 0 #6b6b6b,inset 2px 2px 0 #fff,inset -1px -1px 0 #fff"></div>
<svg class="ic" style="left:764px;top:142px" width="15" height="11"><path d="M.8 .8 H14.2 L9 5.6 V10.2 H6 V5.6 Z" fill="#f4f4f4" stroke="#111" stroke-width="1.2"/><path d="M3.5 2 H11.5 L8.5 5 H6.5Z" fill="#aaa"/></svg>
<div class="t " style="left:795px;top:153px;">Anzahl von Ereignissen: 1.864</div>
<div class="r " style="left:760px;top:163px;width:743px;height:1px;background:#fff"></div>
<div class="r " style="left:760px;top:164px;width:743px;height:1px;background:#6b6b6b"></div>
<div class="r " style="left:761px;top:165px;width:726px;height:490px;overflow:hidden;background:#fff"><div class="r " style="left:0px;top:0px;width:726px;height:24px;background:#fcfcfc;border-bottom:1px solid #e3ebf5"></div>
<div class="r " style="left:269px;top:0px;width:1px;height:23px;background:#e6edf6"></div>
<div class="r " style="left:588px;top:0px;width:1px;height:23px;background:#e6edf6"></div>
<div class="t " style="left:6px;top:16px;">Ebene</div>
<div class="t " style="left:276px;top:16px;">Datum und Uhrzeit</div>
<div class="t " style="left:596px;top:16px;">Quelle</div>
<div class="r " style="left:21px;top:24px;width:704px;height:19px;background:#f0f0f0"></div>
<svg class="ic" style="left:4px;top:25px" width="16" height="16"><use href="#warn2"/></svg>
<div class="t " style="left:22px;top:38px;">Warnung</div>
<div class="t dt" style="left:276px;top:38px;">27.02.2017 18:50:20</div>
<div class="r" style="left:596px;top:24px;width:129px;height:19px;overflow:hidden"><div class="t " style="left:0px;top:14px;letter-spacing:-0.1px">Kernel-PnP</div></div>
<svg class="ic" style="left:4px;top:44px" width="16" height="16"><use href="#err"/></svg>
<div class="t " style="left:22px;top:57px;">Fehler</div>
<div class="t dt" style="left:276px;top:57px;">27.02.2017 18:41:13</div>
<div class="r" style="left:596px;top:43px;width:129px;height:19px;overflow:hidden"><div class="t " style="left:0px;top:14px;letter-spacing:-0.1px">Service Control Manager</div></div>
<svg class="ic" style="left:4px;top:63px" width="16" height="16"><use href="#err"/></svg>
<div class="t " style="left:22px;top:76px;">Fehler</div>
<div class="t dt" style="left:276px;top:76px;">27.02.2017 18:41:13</div>
<div class="r" style="left:596px;top:62px;width:129px;height:19px;overflow:hidden"><div class="t " style="left:0px;top:14px;letter-spacing:-0.1px">Service Control Manager</div></div>
<svg class="ic" style="left:4px;top:82px" width="16" height="16"><use href="#warn"/></svg>
<div class="t " style="left:22px;top:95px;">Warnung</div>
<div class="t dt" style="left:276px;top:95px;">27.02.2017 18:40:38</div>
<div class="r" style="left:596px;top:81px;width:129px;height:19px;overflow:hidden"><div class="t " style="left:0px;top:14px;letter-spacing:-0.1px">Tcpip</div></div>
<svg class="ic" style="left:4px;top:101px" width="16" height="16"><use href="#warn"/></svg>
<div class="t " style="left:22px;top:114px;">Warnung</div>
<div class="t dt" style="left:276px;top:114px;">27.02.2017 18:40:38</div>
<div class="r" style="left:596px;top:100px;width:129px;height:19px;overflow:hidden"><div class="t " style="left:0px;top:14px;letter-spacing:-0.1px">Tcpip</div></div>
<svg class="ic" style="left:4px;top:120px" width="16" height="16"><use href="#crit"/></svg>
<div class="t " style="left:22px;top:133px;">Kritisch</div>
<div class="t dt" style="left:276px;top:133px;">27.02.2017 18:40:34</div>
<div class="r" style="left:596px;top:119px;width:129px;height:19px;overflow:hidden"><div class="t " style="left:0px;top:14px;letter-spacing:-0.1px">Kernel-Power</div></div>
<svg class="ic" style="left:4px;top:139px" width="16" height="16"><use href="#err"/></svg>
<div class="t " style="left:22px;top:152px;">Fehler</div>
<div class="t dt" style="left:276px;top:152px;">27.02.2017 18:40:38</div>
<div class="r" style="left:596px;top:138px;width:129px;height:19px;overflow:hidden"><div class="t " style="left:0px;top:14px;letter-spacing:-0.1px">EventLog</div></div>
<svg class="ic" style="left:4px;top:158px" width="16" height="16"><use href="#err"/></svg>
<div class="t " style="left:22px;top:171px;">Fehler</div>
<div class="t dt" style="left:276px;top:171px;">27.02.2017 18:39:54</div>
<div class="r" style="left:596px;top:157px;width:129px;height:19px;overflow:hidden"><div class="t " style="left:0px;top:14px;letter-spacing:-0.1px">nvlddmkm</div></div>
<svg class="ic" style="left:4px;top:177px" width="16" height="16"><use href="#err"/></svg>
<div class="t " style="left:22px;top:190px;">Fehler</div>
<div class="t dt" style="left:276px;top:190px;">27.02.2017 18:39:54</div>
<div class="r" style="left:596px;top:176px;width:129px;height:19px;overflow:hidden"><div class="t " style="left:0px;top:14px;letter-spacing:-0.1px">nvlddmkm</div></div>
<svg class="ic" style="left:4px;top:196px" width="16" height="16"><use href="#err"/></svg>
<div class="t " style="left:22px;top:209px;">Fehler</div>
<div class="t dt" style="left:276px;top:209px;">27.02.2017 18:39:54</div>
<div class="r" style="left:596px;top:195px;width:129px;height:19px;overflow:hidden"><div class="t " style="left:0px;top:14px;letter-spacing:-0.1px">nvlddmkm</div></div>
<svg class="ic" style="left:4px;top:215px" width="16" height="16"><use href="#err"/></svg>
<div class="t " style="left:22px;top:228px;">Fehler</div>
<div class="t dt" style="left:276px;top:228px;">27.02.2017 18:39:54</div>
<div class="r" style="left:596px;top:214px;width:129px;height:19px;overflow:hidden"><div class="t " style="left:0px;top:14px;letter-spacing:-0.1px">nvlddmkm</div></div>
<svg class="ic" style="left:4px;top:234px" width="16" height="16"><use href="#err"/></svg>
<div class="t " style="left:22px;top:247px;">Fehler</div>
<div class="t dt" style="left:276px;top:247px;">27.02.2017 18:39:54</div>
<div class="r" style="left:596px;top:233px;width:129px;height:19px;overflow:hidden"><div class="t " style="left:0px;top:14px;letter-spacing:-0.1px">nvlddmkm</div></div>
<svg class="ic" style="left:4px;top:253px" width="16" height="16"><use href="#err"/></svg>
<div class="t " style="left:22px;top:266px;">Fehler</div>
<div class="t dt" style="left:276px;top:266px;">27.02.2017 18:39:54</div>
<div class="r" style="left:596px;top:252px;width:129px;height:19px;overflow:hidden"><div class="t " style="left:0px;top:14px;letter-spacing:-0.1px">nvlddmkm</div></div>
<svg class="ic" style="left:4px;top:272px" width="16" height="16"><use href="#err"/></svg>
<div class="t " style="left:22px;top:285px;">Fehler</div>
<div class="t dt" style="left:276px;top:285px;">27.02.2017 18:39:54</div>
<div class="r" style="left:596px;top:271px;width:129px;height:19px;overflow:hidden"><div class="t " style="left:0px;top:14px;letter-spacing:-0.1px">nvlddmkm</div></div>
<svg class="ic" style="left:4px;top:291px" width="16" height="16"><use href="#err"/></svg>
<div class="t " style="left:22px;top:304px;">Fehler</div>
<div class="t dt" style="left:276px;top:304px;">27.02.2017 18:39:54</div>
<div class="r" style="left:596px;top:290px;width:129px;height:19px;overflow:hidden"><div class="t " style="left:0px;top:14px;letter-spacing:-0.1px">nvlddmkm</div></div>
<svg class="ic" style="left:4px;top:310px" width="16" height="16"><use href="#err"/></svg>
<div class="t " style="left:22px;top:323px;">Fehler</div>
<div class="t dt" style="left:276px;top:323px;">27.02.2017 18:39:54</div>
<div class="r" style="left:596px;top:309px;width:129px;height:19px;overflow:hidden"><div class="t " style="left:0px;top:14px;letter-spacing:-0.1px">nvlddmkm</div></div>
<svg class="ic" style="left:4px;top:329px" width="16" height="16"><use href="#err"/></svg>
<div class="t " style="left:22px;top:342px;">Fehler</div>
<div class="t dt" style="left:276px;top:342px;">27.02.2017 18:39:54</div>
<div class="r" style="left:596px;top:328px;width:129px;height:19px;overflow:hidden"><div class="t " style="left:0px;top:14px;letter-spacing:-0.1px">nvlddmkm</div></div>
<svg class="ic" style="left:4px;top:348px" width="16" height="16"><use href="#err"/></svg>
<div class="t " style="left:22px;top:361px;">Fehler</div>
<div class="t dt" style="left:276px;top:361px;">27.02.2017 18:39:54</div>
<div class="r" style="left:596px;top:347px;width:129px;height:19px;overflow:hidden"><div class="t " style="left:0px;top:14px;letter-spacing:-0.1px">nvlddmkm</div></div>
<svg class="ic" style="left:4px;top:367px" width="16" height="16"><use href="#err"/></svg>
<div class="t " style="left:22px;top:380px;">Fehler</div>
<div class="t dt" style="left:276px;top:380px;">27.02.2017 18:39:54</div>
<div class="r" style="left:596px;top:366px;width:129px;height:19px;overflow:hidden"><div class="t " style="left:0px;top:14px;letter-spacing:-0.1px">nvlddmkm</div></div>
<svg class="ic" style="left:4px;top:386px" width="16" height="16"><use href="#err"/></svg>
<div class="t " style="left:22px;top:399px;">Fehler</div>
<div class="t dt" style="left:276px;top:399px;">27.02.2017 18:39:54</div>
<div class="r" style="left:596px;top:385px;width:129px;height:19px;overflow:hidden"><div class="t " style="left:0px;top:14px;letter-spacing:-0.1px">nvlddmkm</div></div>
<svg class="ic" style="left:4px;top:405px" width="16" height="16"><use href="#err"/></svg>
<div class="t " style="left:22px;top:418px;">Fehler</div>
<div class="t dt" style="left:276px;top:418px;">27.02.2017 18:39:54</div>
<div class="r" style="left:596px;top:404px;width:129px;height:19px;overflow:hidden"><div class="t " style="left:0px;top:14px;letter-spacing:-0.1px">nvlddmkm</div></div>
<svg class="ic" style="left:4px;top:424px" width="16" height="16"><use href="#err"/></svg>
<div class="t " style="left:22px;top:437px;">Fehler</div>
<div class="t dt" style="left:276px;top:437px;">27.02.2017 18:39:54</div>
<div class="r" style="left:596px;top:423px;width:129px;height:19px;overflow:hidden"><div class="t " style="left:0px;top:14px;letter-spacing:-0.1px">nvlddmkm</div></div>
<svg class="ic" style="left:4px;top:443px" width="16" height="16"><use href="#err"/></svg>
<div class="t " style="left:22px;top:456px;">Fehler</div>
<div class="t dt" style="left:276px;top:456px;">27.02.2017 18:39:54</div>
<div class="r" style="left:596px;top:442px;width:129px;height:19px;overflow:hidden"><div class="t " style="left:0px;top:14px;letter-spacing:-0.1px">nvlddmkm</div></div>
<svg class="ic" style="left:4px;top:462px" width="16" height="16"><use href="#err"/></svg>
<div class="t " style="left:22px;top:475px;">Fehler</div>
<div class="t dt" style="left:276px;top:475px;">27.02.2017 18:39:54</div>
<div class="r" style="left:596px;top:461px;width:129px;height:19px;overflow:hidden"><div class="t " style="left:0px;top:14px;letter-spacing:-0.1px">nvlddmkm</div></div>
<svg class="ic" style="left:4px;top:481px" width="16" height="16"><use href="#err"/></svg>
<div class="t " style="left:22px;top:494px;">Fehler</div>
<div class="t dt" style="left:276px;top:494px;">27.02.2017 18:39:54</div>
<div class="r" style="left:596px;top:480px;width:129px;height:19px;overflow:hidden"><div class="t " style="left:0px;top:14px;letter-spacing:-0.1px">nvlddmkm</div></div></div>
<div class="r " style="left:1503px;top:164px;width:1px;height:508px;background:#6b6b6b"></div>
<div class="r " style="left:759px;top:671px;width:745px;height:1px;background:#6b6b6b"></div>
<div class="r " style="left:1487px;top:165px;width:16px;height:490px;background:#f0f0f0"></div>
<div class="r " style="left:1487px;top:182px;width:15px;height:17px;background:#cdcdcd"></div>
<svg class="ic" style="left:1490px;top:170px" width="9" height="8"><path d="M1 6.5 L4.5 2.5 L8 6.5" stroke="#5a5a5a" stroke-width="2" fill="none"/></svg>
<svg class="ic" style="left:1490px;top:642px" width="9" height="8"><path d="M1 1.5 L4.5 5.5 L8 1.5" stroke="#5a5a5a" stroke-width="2" fill="none"/></svg>
<div class="r " style="left:761px;top:655px;width:742px;height:16px;background:#f0f0f0"></div>
<div class="r " style="left:778px;top:656px;width:392px;height:14px;background:#cdcdcd"></div>
<svg class="ic" style="left:765px;top:659px" width="8" height="9"><path d="M6.5 1 L2.5 4.5 L6.5 8" stroke="#5a5a5a" stroke-width="2" fill="none"/></svg>
<svg class="ic" style="left:1474px;top:659px" width="8" height="9"><path d="M1.5 1 L5.5 4.5 L1.5 8" stroke="#5a5a5a" stroke-width="2" fill="none"/></svg>
<div class="r " style="left:758px;top:672px;width:747px;height:4px;background:#f8f8f8"></div>
<div class="r " style="left:758px;top:676px;width:747px;height:357px;background:#f0f0f0;border-top:1px solid #9a9a9a;border-left:1px solid #a0a0a0;border-right:1px solid #e3e3e3;border-bottom:1px solid #e3e3e3;box-shadow:inset 1px 1px 0 #6b6b6b,inset 2px 2px 0 #fff,inset -1px -1px 0 #fff"></div>
<div class="t " style="left:766px;top:693px;">Ereignis 219, Kernel-PnP</div>
<svg class="ic" style="left:1484px;top:684px" width="9" height="9"><path d="M1 1 L8 8 M8 1 L1 8" stroke="#000" stroke-width="2"/></svg>
<div class="r " style="left:762px;top:699px;width:740px;height:2px;background:#8f8f8f"></div>
<div class="r " style="left:768px;top:729px;width:726px;height:296px;border:1px solid #d0d0d0;background:#f0f0f0;box-shadow:inset 1px 1px 0 #fff"></div>
<div class="r " style="left:768px;top:707px;width:70px;height:23px;background:#fff;border:1px solid #d0d0d0;border-bottom:none"></div>
<div class="r " style="left:838px;top:709px;width:44px;height:21px;background:#ebebeb;border:1px solid #d0d0d0;border-bottom-color:#d0d0d0"></div>
<div class="t " style="left:776px;top:722px;">Allgemein</div>
<div class="t " style="left:842px;top:724px;">Details</div>
<div class="r " style="left:783px;top:746px;width:678px;height:74px;border:1px solid #dcdcdc;border-top:2px solid #7a7a7a;border-left:2px solid #7a7a7a;background:#f0f0f0"></div>
<div class="t " style="left:786px;top:761px;letter-spacing:-0.2px">Fehler beim Laden des Treibers \Driver\WudfRd für das Gerät SWD\SensorsAndLocationEnum\LPSensorSWDevice.</div>
<div class="t " style="left:781px;top:848px;">Protokollname:</div>
<div class="t " style="left:913px;top:848px;">System</div>
<div class="t " style="left:781px;top:872px;">Quelle:</div>
<div class="t " style="left:913px;top:872px;">Kernel-PnP</div>
<div class="t " style="left:1071px;top:872px;">Protokolliert:</div>
<div class="t dt" style="left:1185px;top:872px;">27.02.2017 18:50:20</div>
<div class="t " style="left:781px;top:896px;">Ereignis-ID:</div>
<div class="t " style="left:913px;top:896px;">219</div>
<div class="t " style="left:1071px;top:896px;">Aufgabenkategorie:</div>
<div class="t " style="left:1185px;top:896px;">(212)</div>
<div class="t " style="left:781px;top:920px;">Ebene:</div>
<div class="t " style="left:913px;top:920px;">Warnung</div>
<div class="t " style="left:1071px;top:920px;">Schlüsselwörter:</div>
<div class="t " style="left:1185px;top:920px;"></div>
<div class="t " style="left:781px;top:944px;">Benutzer:</div>
<div class="t " style="left:913px;top:944px;">SYSTEM</div>
<div class="t " style="left:1071px;top:944px;">Computer:</div>
<div class="t " style="left:1185px;top:944px;">Adrian</div>
<div class="t " style="left:781px;top:968px;">OpCode:</div>
<div class="t " style="left:913px;top:968px;">Info</div>
<div class="t " style="left:781px;top:992px;">Weitere Informationen:</div>
<div class="t " style="left:916px;top:992px;"><a>Onlinehilfe</a></div><div class="r " style="left:1511px;top:108px;width:343px;height:930px;background:#fff;border-left:2px solid #6b6b6b;border-top:2px solid #6b6b6b;border-right:1px solid #e0e0e0;border-bottom:1px solid #e0e0e0"></div>
<div class="r " style="left:1513px;top:110px;width:340px;height:21px;background:#f0f0f0;border-bottom:1px solid #a0a0a0"></div>
<div class="r " style="left:1513px;top:131px;width:340px;height:1px;background:#fff"></div>
<div class="t " style="left:1518px;top:125px;font-size:12.3px"><b>Aktionen</b></div>
<div class="r " style="left:1513px;top:132px;width:340px;height:25px;background:linear-gradient(#bcd3ec,#9bb4d6)"></div>
<div class="t " style="left:1520px;top:150px;font-size:14.6px;color:#1a1a1a">Administrative Ereignisse</div>
<svg class="ic" style="left:1837px;top:142px" width="10" height="6"><path d="M0 5.5 L5 0.5 L10 5.5Z" fill="#000"/></svg>
<svg class="ic" style="left:1518px;top:161px" width="16" height="16"><use href="#openf"/></svg>
<div class="t " style="left:1544px;top:173px;">Gespeicherte Protokolldatei öffnen...</div>
<svg class="ic" style="left:1518px;top:185px" width="16" height="16"><use href="#funnelo"/></svg>
<div class="t " style="left:1544px;top:197px;">Benutzerdefinierte Ansicht erstellen...</div>
<div class="t " style="left:1544px;top:221px;">Benutzerdefinierte Ansicht importieren...</div>
<svg class="ic" style="left:1518px;top:234px" width="16" height="16"><use href="#funnel"/></svg>
<div class="t " style="left:1544px;top:246px;">Aktuelle benutzerdefinierte Ansicht filtern...</div>
<svg class="ic" style="left:1518px;top:258px" width="16" height="16"><use href="#props"/></svg>
<div class="t " style="left:1544px;top:270px;">Eigenschaften</div>
<svg class="ic" style="left:1518px;top:282px" width="16" height="16"><use href="#search"/></svg>
<div class="t " style="left:1544px;top:294px;">Suchen...</div>
<svg class="ic" style="left:1518px;top:306px" width="16" height="16"><use href="#save"/></svg>
<div class="t " style="left:1544px;top:318px;">Alle Ereignisse in der benutzerdefinierten Ansicht sp...</div>
<div class="t " style="left:1544px;top:342px;">Benutzerdefinierte Ansicht exportieren...</div>
<div class="t " style="left:1544px;top:366px;">Benutzerdefinierte Ansicht kopieren...</div>
<div class="t " style="left:1544px;top:390px;">Aufgabe an diese benutzerdefinierte Ansicht anfüge...</div>
<div class="t " style="left:1544px;top:415px;">Ansicht</div>
<svg class="ic" style="left:1518px;top:428px" width="16" height="16"><use href="#refresh"/></svg>
<div class="t " style="left:1544px;top:440px;">Aktualisieren</div>
<svg class="ic" style="left:1518px;top:453px" width="16" height="16"><use href="#help"/></svg>
<div class="t " style="left:1544px;top:465px;">Hilfe</div>
<div class="r " style="left:1518px;top:229px;width:330px;height:1px;background:#e6e6e6"></div>
<div class="r " style="left:1518px;top:399px;width:330px;height:1px;background:#e6e6e6"></div>
<div class="r " style="left:1518px;top:423px;width:330px;height:1px;background:#e6e6e6"></div>
<div class="r " style="left:1518px;top:448px;width:330px;height:1px;background:#e6e6e6"></div>
<svg class="ic" style="left:1839px;top:405px" width="6" height="10"><path d="M0 0 L5 5 L0 10Z" fill="#000"/></svg>
<svg class="ic" style="left:1839px;top:455px" width="6" height="10"><path d="M0 0 L5 5 L0 10Z" fill="#000"/></svg>
<div class="r " style="left:1513px;top:479px;width:340px;height:24px;background:linear-gradient(#bcd3ec,#9bb4d6)"></div>
<div class="t " style="left:1520px;top:496px;font-size:14.6px;color:#1a1a1a">Ereignis 219, Kernel-PnP</div>
<svg class="ic" style="left:1837px;top:488px" width="10" height="6"><path d="M0 5.5 L5 0.5 L10 5.5Z" fill="#000"/></svg>
<svg class="ic" style="left:1518px;top:507px" width="16" height="16"><use href="#props"/></svg>
<div class="t " style="left:1544px;top:519px;">Ereigniseigenschaften</div>
<svg class="ic" style="left:1518px;top:531px" width="16" height="16"><use href="#task"/></svg>
<div class="t " style="left:1544px;top:543px;">Aufgabe an dieses Ereignis anfügen...</div>
<svg class="ic" style="left:1518px;top:555px" width="16" height="16"><use href="#copy"/></svg>
<div class="t " style="left:1544px;top:567px;">Kopieren</div>
<svg class="ic" style="left:1518px;top:579px" width="16" height="16"><use href="#save"/></svg>
<div class="t " style="left:1544px;top:591px;">Ausgewählte Ereignisse speichern...</div>
<svg class="ic" style="left:1518px;top:604px" width="16" height="16"><use href="#refresh"/></svg>
<div class="t " style="left:1544px;top:616px;">Aktualisieren</div>
<svg class="ic" style="left:1518px;top:629px" width="16" height="16"><use href="#help"/></svg>
<div class="t " style="left:1544px;top:641px;">Hilfe</div>
<div class="r " style="left:1518px;top:599px;width:330px;height:1px;background:#e6e6e6"></div>
<div class="r " style="left:1518px;top:624px;width:330px;height:1px;background:#e6e6e6"></div>
<svg class="ic" style="left:1839px;top:557px" width="6" height="10"><path d="M0 0 L5 5 L0 10Z" fill="#000"/></svg>
<svg class="ic" style="left:1839px;top:631px" width="6" height="10"><path d="M0 0 L5 5 L0 10Z" fill="#000"/></svg>
</body></html>
